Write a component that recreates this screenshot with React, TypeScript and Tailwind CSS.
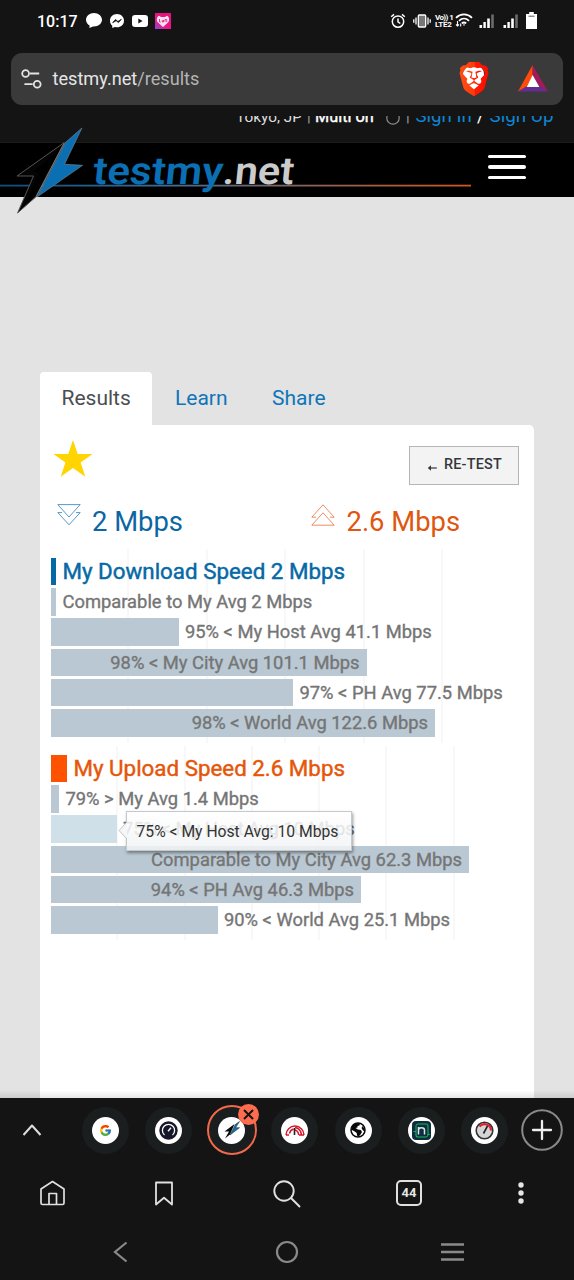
import React from "react";
import { FcGoogle } from "react-icons/fc";
import { SiBrave } from "react-icons/si";

type Bar = { label: string; width: number; inside?: boolean; hover?: boolean };

const download: Bar[] = [
  { label: "Comparable to My Avg 2 Mbps", width: 5 },
  { label: "95% < My Host Avg 41.1 Mbps", width: 127.5 },
  { label: "98% < My City Avg 101.1 Mbps", width: 315.5, inside: true },
  { label: "97% < PH Avg 77.5 Mbps", width: 242 },
  { label: "98% < World Avg 122.6 Mbps", width: 384, inside: true },
];

const upload: Bar[] = [
  { label: "79% > My Avg 1.4 Mbps", width: 8 },
  { label: "75% < My Host Avg 10 Mbps", width: 65.5, hover: true },
  { label: "Comparable to My City Avg 62.3 Mbps", width: 418, inside: true },
  { label: "94% < PH Avg 46.3 Mbps", width: 310, inside: true },
  { label: "90% < World Avg 25.1 Mbps", width: 166.5 },
];

function Signal() {
  return (
    <svg width="16" height="15" viewBox="0 0 16 15">
      <g fill="#fff">
        <rect x="0.5" y="11" width="2.6" height="3" />
        <rect x="4.4" y="8" width="2.4" height="6" />
        <rect x="8.2" y="4.5" width="2.6" height="9.5" />
      </g>
      <rect x="12.2" y="0.5" width="2.6" height="13.5" fill="#6b6b6b" />
    </svg>
  );
}

function StatusBar() {
  return (
    <div className="flex h-[52.500px] shrink-0 items-start pl-[37px] pt-[12px] text-white">
      <div className="h-[18px] w-[49px] text-[16px] font-medium leading-[19px] whitespace-nowrap">10:17</div>
      <svg width="16" height="17" viewBox="0 0 16 17" className="mt-px">
        <path d="M8 0C3.500 0 0 3 0 6.800c0 2.400 1.400 4.500 3.600 5.700L3.400 15l3.600-1.600 1 .1c4.500 0 8-3 8-6.700S12.500 0 8 0z" fill="#fff" />
      </svg>
      <svg width="14" height="15" viewBox="0 0 14 15" className="ml-2 mt-[2px]">
        <path d="M7 0C3 0 0 2.800 0 6.700c0 2 .8 3.700 2.200 4.900L2.300 14l2.600-1.100 2.100.4c4 0 7-2.800 7-6.600S11 0 7 0z" fill="#fff" />
        <path d="M2.700 8.700l2.800-3.200 2.400 2 3.400-2.200-2.800 3.300-2.400-1.900z" fill="#141414" stroke="#141414" strokeWidth=".8" />
      </svg>
      <svg width="16" height="12" viewBox="0 0 16 12" className="ml-2 mt-[3px]">
        <rect width="16" height="12" rx="3" fill="#fff" />
        <path d="M6.300 3.500v5l4.300-2.500z" fill="#141414" />
      </svg>
      <svg width="16" height="16" viewBox="0 0 16 16" className="ml-[7px] mt-px">
        <defs>
          <linearGradient id="pk" x1="0" y1="1" x2="0.6" y2="0.2">
            <stop offset="0" stopColor="#7a4fd0" />
            <stop offset="0.5" stopColor="#f0168a" />
            <stop offset="1" stopColor="#e6127c" />
          </linearGradient>
        </defs>
        <rect width="16" height="16" fill="url(#pk)" />
        <path d="M8 14L3 9.500C1 7.500 1.800 3.500 4 2.700L6 4h4l2-1.300c2.200.8 3 4.800 1 6.800z" fill="#ffe3f2" />
        <path d="M4.500 6v3h1.300M7.300 7v2h1.200V7M10 9V6.500h1.700V9" fill="none" stroke="#e6127c" strokeWidth=".8" />
      </svg>
      <svg width="16" height="16" viewBox="0 0 16 16" className="ml-[219px] mt-px" fill="none" stroke="#fff" strokeWidth="1.500">
        <circle cx="8" cy="8.600" r="5.700" />
        <path d="M8 5.400v3.400l2.300 1.700M1.200 3.800l2.800-2.400M14.800 3.800L12 1.400" />
      </svg>
      <svg width="18" height="14" viewBox="0 0 18 14" className="ml-[7px] mt-[2px]">
        <rect x="5.300" y="1" width="7.400" height="12" rx="1" fill="#777" stroke="#fff" strokeWidth="1.300" />
        <path d="M3 3.500v7M.8 5.200v3.600M15 3.500v7M17.200 5.200v3.600" stroke="#fff" strokeWidth="1.300" />
      </svg>
      <div className="ml-[4px] mt-[2px] w-[18px] text-[8px] font-bold leading-[7px] tracking-[-0.2px] whitespace-nowrap">
        <div className="tracking-[-0.6px]">Vo)) 1</div>
        <div>LTE2</div>
      </div>
      <svg width="18" height="16" viewBox="0 0 18 16" className="ml-[2px]" fill="none" stroke="#fff" strokeWidth="1.800">
        <path d="M1 5.800C5.600 1.200 12.400 1.200 17 5.800M4 8.800c3-2.900 7-2.900 10 0M6.800 11.400c1.400-1.200 3-1.200 4.400 0" />
        <path d="M7.800 12.500h2.400L9 14z" fill="#fff" stroke="none" />
        <path d="M2.500 9v5M1 12.500l1.500 1.500L4 12.500M5.700 14.500v-3" strokeWidth="1.100" />
      </svg>
      <div className="ml-[6px] mt-[2px]"><Signal /></div>
      <div className="ml-[7.500px] mt-[2px]"><Signal /></div>
      <svg width="11" height="17" viewBox="0 0 11 17" className="ml-[7.500px]">
        <path d="M3.200 0h4.600v2H11v15H0V2h3.200z" fill="#fff" />
        <path d="M2.500 4.200h6" stroke="#444" strokeWidth=".9" />
      </svg>
    </div>
  );
}

function AddressBar() {
  return (
    <div className="mx-[11px] flex h-[52.500px] shrink-0 items-center rounded-[11px] bg-[#3a3a3a]">
      <svg width="22" height="20" viewBox="0 0 22 20" className="ml-[10px]" fill="none" stroke="#e3e3e3" strokeWidth="1.800">
        <circle cx="4.600" cy="4.500" r="3.400" />
        <path d="M9 4.500h9.200M3.400 15.200h8.300" />
        <circle cx="16.200" cy="15.200" r="3.400" />
      </svg>
      <div className="ml-[9.500px] pt-px text-[18.150px] leading-6 text-[#e6e6e6]">
        testmy.net<span className="text-[#b4b4b4]">/results</span>
      </div>
      <div className="relative ml-auto mr-[30px] flex h-[35px] w-[29px] items-center justify-center">
        <div className="absolute left-[4px] top-[5px] h-[23px] w-[21px] rounded-[8px] bg-white" />
        <svg width="0" height="0" className="absolute">
          <defs>
            <linearGradient id="br" x1="0" x2="1" y1="0" y2="0">
              <stop offset="0" stopColor="#ff4f10" />
              <stop offset=".5" stopColor="#ff3a0c" />
              <stop offset=".55" stopColor="#ff1a00" />
              <stop offset="1" stopColor="#ff0a00" />
            </linearGradient>
          </defs>
        </svg>
        <SiBrave className="relative h-[34px] w-[34px] shrink-0" style={{ fill: "url(#br)" }} />
      </div>
      <svg width="30" height="27" viewBox="0 0 30 27" className="mr-[15px]">
        <path d="M14.600 0L0 26.500l9-5.300 5.600-10.700z" fill="#ff4a0a" />
        <path d="M14.600 0L30 26.500l-8.700-5.300-6.700-10.700z" fill="#a3195b" />
        <path d="M0 26.500h30l-8.700-5.300H9z" fill="#662d91" />
        <path d="M14.600 10L8.700 22h12.700z" fill="#fff" />
      </svg>
    </div>
  );
}

function SiteHeader() {
  return (
    <header className="relative z-10 shrink-0">
      <div className="h-[11px]" />
      <div className="h-[27px] overflow-hidden border-b border-[#1c1c1c]">
        <div className="-mt-[11px] ml-[236px] flex h-[22px] items-baseline leading-[22px] whitespace-nowrap">
          <span className="w-[71px] text-[15.400px] text-[#dcdcdc]">Tokyo, JP</span>
          <span className="w-[8px] text-[15px] text-[#a0a0a0]">|</span>
          <span className="w-[71px] text-[16.300px] text-white [-webkit-text-stroke:0.4px_#fff]">Multi on</span>
          <svg width="14" height="14" viewBox="0 0 14 14" className="relative top-[2px] self-center" fill="none" stroke="#8d8d8d" strokeWidth="1.200">
            <circle cx="7" cy="7" r="6.200" />
            <path d="M7 5V3" />
          </svg>
          <span className="ml-[6px] w-[9.500px] text-[15px] text-[#a0a0a0]">|</span>
          <span className="w-[61.500px] text-[18.600px] text-[#0f86d3]">Sign In</span>
          <span className="w-[12.500px] text-[18px] text-white">/</span>
          <span className="text-[18.800px] text-[#0f86d3]">Sign Up</span>
        </div>
      </div>
      <div className="flex h-[54px] justify-end bg-black pr-[48px] pt-[11.500px]">
        <div className="flex w-[38px] flex-col gap-[7px]">
          <div className="h-[3.500px] rounded-full bg-white" />
          <div className="h-[3.500px] rounded-full bg-white" />
          <div className="h-[3.500px] rounded-full bg-white" />
        </div>
      </div>
      <svg width="480" height="94" viewBox="0 122 480 94" className="absolute left-0 top-[17px]">
        <defs>
          <linearGradient id="ln" x1="0" x2="1" y1="0" y2="0">
            <stop offset="0" stopColor="#0c4f80" />
            <stop offset=".35" stopColor="#3e6d97" />
            <stop offset=".65" stopColor="#8a6258" />
            <stop offset="1" stopColor="#cf571e" />
          </linearGradient>
        </defs>
        <rect x="0" y="184.700" width="471" height="1.800" fill="url(#ln)" />
        <path d="M64.300 142.500L17 176h16.500L17.600 213 36 196.700z" fill="#050505" stroke="#555" strokeWidth="1" />
        <path d="M60 149L33 172h6L26 203 35 194z" fill="#000" />
        <path d="M64.300 143L36 197" stroke="#777" strokeWidth="1" />
        <path d="M81.900 128L65.700 142.300 37 197 82.600 165.300 64.500 164.300z" fill="#0b6fb3" stroke="#6f7f88" strokeWidth=".7" />
        <g fontFamily="Roboto, sans-serif" fontWeight="600" fontSize="38.500" transform="translate(0 184) skewX(-6)">
          <text x="92" y="0" textLength="130" lengthAdjust="spacingAndGlyphs" fill="#0b6fb3">testmy</text>
          <text x="222" y="0" textLength="71" lengthAdjust="spacingAndGlyphs" fill="#cbcbcb">.net</text>
        </g>
      </svg>
    </header>
  );
}

function Row({ bar }: { bar: Bar }) {
  return (
    <div className="flex h-[30.250px] items-start whitespace-nowrap text-[18.350px] leading-[27.500px] text-[#757575] [-webkit-text-stroke:0.35px_#757575]">
      <div
        className={
          bar.hover
            ? "h-[27.500px] shrink-0 bg-[#d0e0e9]"
            : "flex h-[27.500px] shrink-0 justify-end bg-[#b9c8d3]"
        }
        style={{ width: bar.width }}
      >
        {bar.inside && <span className="pr-[7px]">{bar.label}</span>}
      </div>
      {!bar.inside && <span className="ml-[6.500px]">{bar.label}</span>}
    </div>
  );
}

function Chart(props: {
  title: string;
  titleWidth: number;
  titleBar: string;
  titleText: string;
  bars: Bar[];
  step: number;
  lines: number;
  children?: React.ReactNode;
}) {
  return (
    <div className="relative h-[194px]">
      <div className="absolute inset-y-0 left-0 flex">
        {Array.from({ length: props.lines }, (_, i) => (
          <div key={i} className="border-r-2 border-[#f8f8f8]" style={{ width: props.step }} />
        ))}
      </div>
      <div className="relative pt-[8.750px]">
        <div className="flex h-[30.250px] items-start whitespace-nowrap">
          <div className={props.titleBar} style={{ width: props.titleWidth }} />
          <span className={props.titleText}>{props.title}</span>
        </div>
        {props.bars.map((b) => (
          <Row key={b.label} bar={b} />
        ))}
      </div>
      {props.children}
    </div>
  );
}

function Tooltip() {
  return (
    <div className="absolute left-[75px] top-[65px] flex h-[40px] w-[226px] items-center border border-[#c4c9cc] bg-gradient-to-b from-white/85 to-[#f1f3f4]/85 pl-[9.500px] pt-[2px] text-[15.700px] whitespace-nowrap text-[#333] shadow-[1px_2px_3px_rgba(0,0,0,0.4)]">
      <svg width="9" height="17" viewBox="0 0 9 17" className="absolute -left-[9px] top-[10px]">
        <path d="M9 0L1 8.500 9 17" fill="#f5f6f7" stroke="#bfc4c7" strokeWidth="1" />
      </svg>
      75% &lt; My Host Avg: 10 Mbps
    </div>
  );
}

function Results() {
  return (
    <main className="relative h-[901px] shrink-0 bg-[#e3e3e3] pl-[40px] pt-[175px]">
      <nav className="flex h-[53px] text-[21px] leading-[52px] text-[#0f75b8]">
        <div className="w-[112px] rounded-t-[4px] bg-white pl-[21.500px] text-[#4a4e51]">Results</div>
        <div className="ml-[23px] w-[97px]">Learn</div>
        <div>Share</div>
      </nav>
      <section className="h-[673px] w-[494px] rounded-tr-[5px] bg-white pl-[11px]">
        <div className="flex h-[79px] items-start justify-between pr-[15px] pt-[15px]">
          <svg width="40" height="38" viewBox="0 0 40 38" className="ml-[2px]">
            <path d="M20 0l4.700 14H39.500L27.600 22.500 32.300 36.700 20 28 7.700 36.700 12.400 22.500.5 14h14.800z" fill="#ffd400" />
          </svg>
          <button className="mt-[6px] flex h-[39px] w-[110px] items-center border border-[#b5b5b5] bg-[#f3f3f3] pl-[17px] text-[14.400px] font-medium text-[#33373a]">
            <svg width="11" height="8" viewBox="0 0 11 8" className="mr-[6px] mt-[4px]">
              <path d="M9.800 4H2" stroke="#33373a" strokeWidth="1.200" />
              <path d="M4 1.300L.8 4 4 6.700z" fill="#33373a" />
            </svg>
            <span className="-mt-px tracking-[0.2px]">RE-TEST</span>
          </button>
        </div>
        <div className="flex h-[45px] text-[27.400px] leading-[37px]">
          <svg width="24" height="22" viewBox="0 0 24 22" className="ml-[6px]" fill="none" stroke="#2f7fb8" strokeWidth=".8">
            <path d="M.8.600h22.400L12 13zM.8 8.600H5M19 8.600h4.200L12 20.800.8 8.600" />
          </svg>
          <div className="ml-[11px] w-[219px] text-[#0b67a3]">2 Mbps</div>
          <svg width="24" height="22" viewBox="0 0 24 22" fill="none" stroke="#e4713a" strokeWidth=".8">
            <path d="M.8 21.200h22.400L12 8.800zM5 13.200H.8L12 .8l11.200 12.400H19" />
          </svg>
          <div className="ml-[11.500px] text-[#e0560f]">2.6 Mbps</div>
        </div>
        <Chart
          title="My Download Speed 2 Mbps"
          titleWidth={5}
          titleBar="h-[27.500px] bg-[#0569a6]"
          titleText="ml-[6.500px] text-[22.350px] leading-[27.500px] text-[#0569a6] [-webkit-text-stroke:0.45px_#0569a6]"
          bars={download}
          step={78.4}
          lines={5}
        />
        <div className="h-[3px]" />
        <Chart
          title="My Upload Speed 2.6 Mbps"
          titleWidth={16}
          titleBar="h-[27.500px] bg-[#ff5200]"
          titleText="ml-[6.500px] text-[22.350px] leading-[27.500px] text-[#e6560a] [-webkit-text-stroke:0.45px_#e6560a]"
          bars={upload}
          step={67.3}
          lines={6}
        >
          <Tooltip />
        </Chart>
      </section>
      <div className="absolute inset-x-0 bottom-0 h-[8px] bg-gradient-to-b from-transparent to-black/10" />
    </main>
  );
}

function Favicon({ children }: { children: React.ReactNode }) {
  return (
    <div className="flex h-[47px] w-[47px] shrink-0 items-center justify-center rounded-full bg-[#1a1e1f]">
      <div className="flex h-[27px] w-[27px] items-center justify-center rounded-full bg-white">{children}</div>
    </div>
  );
}

function TabStrip() {
  return (
    <div className="flex h-[64px] shrink-0 items-center">
      <svg width="20" height="12" viewBox="0 0 20 12" className="ml-[22px] mr-[39.500px]" fill="none" stroke="#dedede" strokeWidth="2">
        <path d="M1.500 11L10 1.500 18.500 11" strokeLinejoin="round" />
      </svg>
      <div className="flex gap-[16.300px]">
        <Favicon><FcGoogle size={13} /></Favicon>
        <Favicon>
          <svg width="19" height="19" viewBox="0 0 19 19">
            <circle cx="9.500" cy="9.500" r="9.200" fill="#17172b" />
            <path d="M5.500 14A6.100 6.100 0 1 1 13.500 14" fill="none" stroke="#fff" strokeWidth="1.300" />
            <path d="M9 10.200l3-3.400" stroke="#fff" strokeWidth="1.400" />
          </svg>
        </Favicon>
        <div className="relative">
          <Favicon>
            <svg width="18" height="20" viewBox="0 0 18 20">
              <path d="M11.500 4L1.500 11.500H6L2 18.500 7 14.500z" fill="#0a0a0a" />
              <path d="M16.500 1.500L12.300 4.500 7 15l9.500-7.300h-4z" fill="#1b6fa0" stroke="#16384c" strokeWidth=".6" />
            </svg>
          </Favicon>
          <div className="absolute -left-[1px] -top-[1.500px] h-[50px] w-[50px] rounded-full border-2 border-[#f4694b]" />
          <div className="absolute -top-[3px] left-[29.500px] flex h-[21px] w-[21px] items-center justify-center rounded-full bg-[#fb6d4e]">
            <svg width="11" height="11" viewBox="0 0 11 11" stroke="#141414" strokeWidth="2">
              <path d="M1 1l9 9M10 1l-9 9" />
            </svg>
          </div>
        </div>
        <Favicon>
          <svg width="20" height="12" viewBox="0 0 20 12" fill="none" stroke="#d5152a" strokeWidth="1.400">
            <path d="M1 11a9 9 0 0 1 18 0M4 11H1M4.500 9.500a6 6 0 0 1 4-4.500M10 3.500c4 .5 6 3.500 6.500 7.500M10 6c2 .5 3.500 2.500 3.700 5M19 11h-5" />
            <path d="M9.500 4v7" stroke="#222" strokeWidth="1.600" />
          </svg>
        </Favicon>
        <Favicon>
          <svg width="16" height="16" viewBox="0 0 16 16">
            <circle cx="8" cy="8" r="7" fill="#fff" stroke="#080808" strokeWidth="1.500" />
            <path d="M5 1.500L10 1l-.5 2.500L7.500 4v1.500L5.500 6l2.300 1.500 3 .5 1.200 2-1.500 2.500-2 2.300L7 13.500l-.3-2.500-2-1.500L1 7.500 2 4zM12 4l2.700 2.500.3 3-2-1-1.300-2z" fill="#080808" />
          </svg>
        </Favicon>
        <Favicon>
          <svg width="19" height="19" viewBox="0 0 19 19" fill="none">
            <rect width="19" height="19" rx="4" fill="#0d2e3f" />
            <path d="M1.500 10.500H4V14q0 2 2 2h5M8 3h6q2 0 2 2v8.500h1.800" stroke="#20b15a" strokeWidth="1.100" />
            <path d="M4 10V5q0-2 2-2h2M16 13.500q0 2.500-2 2.500h-3" stroke="#20b15a" strokeWidth="1" />
            <path d="M6.500 13.500V6M6.500 9q0-2.300 3-2.300t3 2.300v4.500" stroke="#d9e6e6" strokeWidth="1.500" />
          </svg>
        </Favicon>
        <Favicon>
          <svg width="19" height="19" viewBox="0 0 19 19" fill="none">
            <circle cx="9.500" cy="9.500" r="8.300" fill="#d5d5d5" stroke="#333" strokeWidth="1.600" />
            <path d="M4.500 5.500A6.500 6.500 0 0 1 16 9.500" stroke="#d8232f" strokeWidth="2.200" />
            <path d="M8.500 12.500L12.500 5" stroke="#222" strokeWidth="1.600" />
          </svg>
        </Favicon>
      </div>
      <svg width="42" height="42" viewBox="0 0 42 42" className="ml-[13px] shrink-0" fill="none">
        <circle cx="21" cy="21" r="19.800" stroke="#8a8a8a" strokeWidth="2" />
        <path d="M21 12v18M12 21h18" stroke="#efefef" strokeWidth="2.300" strokeLinecap="round" />
      </svg>
    </div>
  );
}

function Toolbar() {
  return (
    <div className="flex h-[62px] shrink-0 items-center">
      <svg width="25" height="26" viewBox="0 0 25 26" className="ml-[40px]" fill="none" stroke="#e0e0e0" strokeWidth="1.700" strokeLinejoin="round">
        <path d="M1 9L12.500 1.500 24 9v14q0 1.500-1.500 1.500h-20Q1 24.500 1 23z" />
        <path d="M9 24.500V13.500h7.500v11" />
      </svg>
      <svg width="18" height="25" viewBox="0 0 18 25" className="ml-[90px]" fill="none" stroke="#e0e0e0" strokeWidth="1.800" strokeLinejoin="round">
        <path d="M1 1.500h16v22l-8-6.800-8 6.800z" />
      </svg>
      <svg width="28" height="28" viewBox="0 0 28 28" className="ml-[100px] mt-px" fill="none" stroke="#e0e0e0" strokeWidth="1.900">
        <circle cx="11" cy="11" r="9.700" />
        <path d="M18 18l8.500 8.500" strokeLinecap="round" />
      </svg>
      <div className="ml-[95px] flex h-[26px] w-[26px] items-center justify-center rounded-[5px] border-2 border-[#e0e0e0] text-[13px] font-bold text-[#e6e6e6]">44</div>
      <svg width="6" height="22" viewBox="0 0 6 22" className="ml-[96px]" fill="#e6e6e6">
        <circle cx="3" cy="3" r="2.700" />
        <circle cx="3" cy="11" r="2.700" />
        <circle cx="3" cy="19" r="2.700" />
      </svg>
    </div>
  );
}

function SystemNav() {
  return (
    <div className="flex h-[56px] items-center">
      <svg width="15" height="22" viewBox="0 0 15 22" className="ml-[113px]" fill="none" stroke="#8a8a8a" strokeWidth="2.200">
        <path d="M13.500 1.500L2 11l11.500 9.500" />
      </svg>
      <svg width="24" height="24" viewBox="0 0 24 24" className="ml-[147px]" fill="none" stroke="#8a8a8a" strokeWidth="2.200">
        <circle cx="12" cy="12" r="10" />
      </svg>
      <svg width="23" height="20" viewBox="0 0 23 20" className="ml-[142px]" fill="none" stroke="#8a8a8a" strokeWidth="2.400">
        <path d="M0 2.500h23M0 10h23M0 17.500h23" />
      </svg>
    </div>
  );
}

export default function App() {
  return (
    <div className="flex h-[1280px] w-[574px] flex-col overflow-hidden bg-[#141414] font-[Roboto,sans-serif]">
      <StatusBar />
      <AddressBar />
      <SiteHeader />
      <Results />
      <TabStrip />
      <Toolbar />
      <SystemNav />
    </div>
  );
}
